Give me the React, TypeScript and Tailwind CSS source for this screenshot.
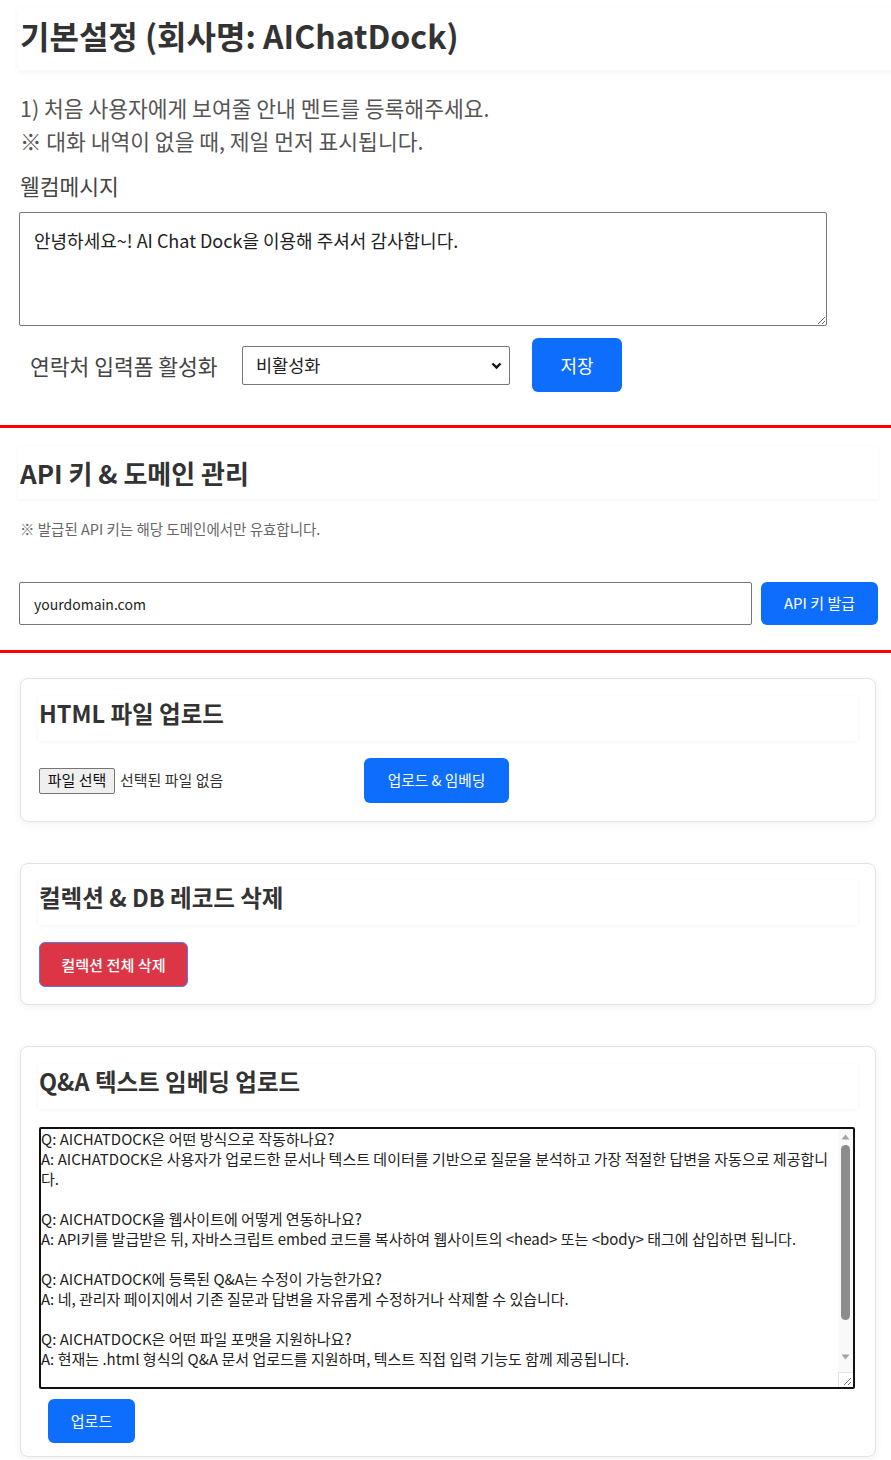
import React from "react";

const qa = `Q: AICHATDOCK은 어떤 방식으로 작동하나요?
A: AICHATDOCK은 사용자가 업로드한 문서나 텍스트 데이터를 기반으로 질문을 분석하고 가장 적절한 답변을 자동으로 제공합니다.

Q: AICHATDOCK을 웹사이트에 어떻게 연동하나요?
A: API키를 발급받은 뒤, 자바스크립트 embed 코드를 복사하여 웹사이트의 <head> 또는 <body> 태그에 삽입하면 됩니다.

Q: AICHATDOCK에 등록된 Q&A는 수정이 가능한가요?
A: 네, 관리자 페이지에서 기존 질문과 답변을 자유롭게 수정하거나 삭제할 수 있습니다.

Q: AICHATDOCK은 어떤 파일 포맷을 지원하나요?
A: 현재는 .html 형식의 Q&A 문서 업로드를 지원하며, 텍스트 직접 입력 기능도 함께 제공됩니다.

Q: AICHATDOCK의 답변 정확도는 어떻게 높일 수 있나요?
A: 질문과 답변을 구체적으로 작성하고, 자주 묻는 질문을 꾸준히 추가하면 정확도가 높아집니다.`;

function CardHeader({ children }: { children: React.ReactNode }) {
  return (
    <div className="h-[45px] flex items-center pb-[9px] pl-[1px] bg-white shadow-[0_1px_4px_rgba(0,0,0,0.06)] rounded-[2px]">
      <h2 className="text-[23.5px] font-bold text-[#333] leading-none">{children}</h2>
    </div>
  );
}

export default function App() {
  return (
    <div
      className="w-full overflow-x-hidden bg-white text-[#333]"
      style={{ fontFamily: '"Noto Sans CJK KR", "Noto Sans", sans-serif' }}
    >
      {/* Section 1 */}
      <section className="pl-[18px]">
        <div className="mt-[8px] h-[62px] w-[900px] flex items-center pb-[8px] pl-[2px] bg-white shadow-[0_2px_6px_rgba(0,0,0,0.05)]">
          <h1 className="text-[32px] font-bold text-[#333] leading-none">기본설정 (회사명: AIChatDock)</h1>
        </div>
        <div className="pl-[2px] mt-[21px] text-[21.5px] leading-[33px] text-[#555]">
          <p>1) 처음 사용자에게 보여줄 안내 멘트를 등록해주세요.</p>
          <p>※ 대화 내역이 없을 때, 제일 먼저 표시됩니다.</p>
        </div>
        <p className="pl-[2px] mt-[12px] text-[21.5px] leading-[33px] text-[#444]">웰컴메시지</p>
        <textarea
          className="mt-[10px] ml-[1px] block w-[808px] h-[114px] border border-[#767676] rounded-[2px] px-[14px] pt-[15px] text-[18px] leading-[24px] text-[#222] bg-white"
          defaultValue="안녕하세요~! AI Chat Dock을 이용해 주셔서 감사합니다."
        />
        <div className="mt-[12px] flex items-center">
          <span className="w-[224px] pl-[12px] text-[21.5px] text-[#444] leading-none pt-[2px]">연락처 입력폼 활성화</span>
          <div className="relative w-[268px] h-[39px]">
            <select
              className="appearance-none w-full h-full border border-[#767676] rounded-[2px] bg-white pl-[13px] text-[17.5px] text-[#222]"
              defaultValue="off"
            >
              <option value="off">비활성화</option>
              <option value="on">활성화</option>
            </select>
            <svg
              className="absolute right-[8px] top-[16px] pointer-events-none"
              width="11"
              height="8"
              viewBox="0 0 11 8"
            >
              <path d="M1.5 1.5 L5.5 5.5 L9.5 1.5" fill="none" stroke="#111" strokeWidth="2.4" />
            </svg>
          </div>
          <button className="ml-[22px] w-[90px] h-[54px] rounded-[6px] bg-[#0d6efd] text-white text-[18px]">
            저장
          </button>
        </div>
      </section>

      <div className="mt-[33px] h-[3px] bg-[#ff0000]" />

      {/* Section 2 */}
      <section className="pl-[18px] pr-[13px]">
        <div className="mt-[18px] h-[53px] flex items-center pl-[2px] bg-white shadow-[0_1px_4px_rgba(0,0,0,0.06)]">
          <h2 className="text-[26px] font-bold text-[#333] leading-none">API 키 &amp; 도메인 관리</h2>
        </div>
        <p className="mt-[20px] pl-[2px] text-[14.5px] leading-[20px] text-[#666]">※ 발급된 API 키는 해당 도메인에서만 유효합니다.</p>
        <div className="mt-[43px] flex items-center pl-[1px]">
          <input
            className="w-[733px] h-[43px] border border-[#767676] rounded-[2px] px-[14px] text-[14px] text-[#222] bg-white"
            defaultValue="yourdomain.com"
          />
          <button className="ml-[9px] w-[117px] h-[43px] rounded-[6px] bg-[#0d6efd] text-white text-[15px]">
            API 키 발급
          </button>
        </div>
      </section>

      <div className="mt-[25px] h-[3px] bg-[#ff0000]" />

      <div className="px-[20px] pr-[15px] pb-[2px]">
        {/* Card 1 */}
        <div className="mt-[25px] w-[856px] border border-[#e3e3e3] rounded-[8px] bg-white shadow-[0_2px_8px_rgba(0,0,0,0.06)] px-[17px] pt-[17px] pb-[18px]">
          <CardHeader>HTML 파일 업로드</CardHeader>
          <div className="mt-[17px] flex items-center">
            <div className="w-[326px] flex items-center pl-[1px]">
              <span className="h-[26px] w-[76px] flex items-center justify-center border border-[#767676] rounded-[2px] bg-[#efefef] text-[15px] text-[#111]">
                파일 선택
              </span>
              <span className="ml-[5px] text-[15px] text-[#333]">선택된 파일 없음</span>
            </div>
            <button className="w-[145px] h-[45px] rounded-[6px] bg-[#0d6efd] text-white text-[14.7px]">
              업로드 &amp; 임베딩
            </button>
          </div>
        </div>

        {/* Card 2 */}
        <div className="mt-[41px] w-[856px] border border-[#e3e3e3] rounded-[8px] bg-white shadow-[0_2px_8px_rgba(0,0,0,0.06)] px-[17px] pt-[16px] pb-[17px]">
          <CardHeader>컬렉션 &amp; DB 레코드 삭제</CardHeader>
          <button className="mt-[17px] ml-[1px] w-[149px] h-[45px] rounded-[6px] bg-[#dc3545] border border-[#4f7be8] text-white text-[15.2px] font-medium">
            컬렉션 전체 삭제
          </button>
        </div>

        {/* Card 3 */}
        <div className="mt-[41px] w-[856px] border border-[#e3e3e3] rounded-[8px] bg-white shadow-[0_2px_8px_rgba(0,0,0,0.06)] px-[17px] pt-[17px] pb-[13px]">
          <CardHeader>Q&amp;A 텍스트 임베딩 업로드</CardHeader>
          <div className="relative mt-[18px] ml-[1px] w-[816px] h-[262px]">
            <textarea
              className="block w-full h-full border-2 border-[#111] rounded-[2px] p-0 pr-[15px] text-[15px] leading-[20px] text-[#222] bg-white overflow-hidden resize-none"
              defaultValue={qa}
            />
            {/* scrollbar overlay */}
            <div className="absolute right-[2px] top-[2px] bottom-[2px] w-[15px] bg-[#f9f9f9] pointer-events-none flex flex-col items-center">
              <svg className="mt-[5px]" width="9" height="6" viewBox="0 0 9 6">
                <path d="M0.5 5.5 L4.5 0.5 L8.5 5.5 Z" fill="#a3a3a3" />
              </svg>
              <div className="mt-[5px] w-[9px] h-[175px] rounded-full bg-[#8c8c8c]" />
              <svg className="mt-[34px]" width="9" height="6" viewBox="0 0 9 6">
                <path d="M0.5 0.5 L4.5 5.5 L8.5 0.5 Z" fill="#a3a3a3" />
              </svg>
              <div className="mt-auto w-[15px] h-[15px] bg-white border-t border-l border-[#e5e5e5] relative">
                <svg className="absolute right-[1px] bottom-[1px]" width="10" height="10" viewBox="0 0 10 10">
                  <path d="M9 2 L2 9 M9 6 L6 9" stroke="#777" strokeWidth="1" />
                </svg>
              </div>
            </div>
          </div>
          <button className="mt-[10px] ml-[10px] w-[87px] h-[44px] rounded-[6px] bg-[#0d6efd] text-white text-[15px]">
            업로드
          </button>
        </div>
      </div>
    </div>
  );
}
